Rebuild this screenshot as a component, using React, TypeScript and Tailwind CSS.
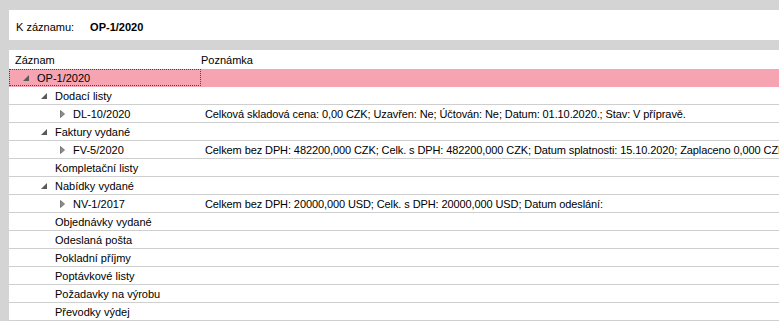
import React from 'react';

type Row = {
  label: string;
  level: number;
  icon?: 'open' | 'closed';
  note?: string;
  selected?: boolean;
};

const rows: Row[] = [
  { label: 'OP-1/2020', level: 0, icon: 'open', selected: true },
  { label: 'Dodací listy', level: 1, icon: 'open' },
  {
    label: 'DL-10/2020',
    level: 2,
    icon: 'closed',
    note: 'Celková skladová cena: 0,00 CZK; Uzavřen: Ne; Účtován: Ne; Datum: 01.10.2020.; Stav: V přípravě.',
  },
  { label: 'Faktury vydané', level: 1, icon: 'open' },
  {
    label: 'FV-5/2020',
    level: 2,
    icon: 'closed',
    note: 'Celkem bez DPH: 482200,000 CZK; Celk. s DPH: 482200,000 CZK; Datum splatnosti: 15.10.2020; Zaplaceno 0,000 CZK',
  },
  { label: 'Kompletační listy', level: 1 },
  { label: 'Nabídky vydané', level: 1, icon: 'open' },
  {
    label: 'NV-1/2017',
    level: 2,
    icon: 'closed',
    note: 'Celkem bez DPH: 20000,000 USD; Celk. s DPH: 20000,000 USD; Datum odeslání:',
  },
  { label: 'Objednávky vydané', level: 1 },
  { label: 'Odeslaná pošta', level: 1 },
  { label: 'Pokladní příjmy', level: 1 },
  { label: 'Poptávkové listy', level: 1 },
  { label: 'Požadavky na výrobu', level: 1 },
  { label: 'Převodky výdej', level: 1 },
];

// expander column starts here, label follows 14px later
const iconIndent = ['pl-[14px]', 'pl-[32px]', 'pl-[50px]'];
const textIndent = ['pl-[28px]', 'pl-[46px]', 'pl-[64px]'];

function Expander({ kind }: { kind: 'open' | 'closed' }) {
  return (
    <span className="w-[14px] h-[17px] flex items-center shrink-0">
      {kind === 'open' ? (
        <svg width="6" height="6" viewBox="0 0 6 6">
          <path d="M6 0 L6 6 L0 6 Z" fill="#595959" />
        </svg>
      ) : (
        <svg width="5" height="8" viewBox="0 0 5 8" className="ml-[1px]">
          <path d="M0.5 0.5 L4.5 4 L0.5 7.5 Z" fill="#8c8c8c" stroke="#7a7a7a" strokeWidth="1" />
        </svg>
      )}
    </span>
  );
}

function TreeRow({ row }: { row: Row }) {
  return (
    <div
      className={
        'flex h-[18px] items-center border-b whitespace-nowrap ' +
        (row.selected ? 'bg-[#f6a4b2] border-[#f6a4b2]' : 'border-[#cfcfcf]')
      }
    >
      <div
        className={
          'w-[192px] h-full shrink-0 flex items-center ' +
          (row.icon ? iconIndent[row.level] : textIndent[row.level]) +
          (row.selected ? ' outline-1 outline-dotted outline-offset-[-1px] outline-[#1f5e3a]' : '')
        }
      >
        {row.icon && <Expander kind={row.icon} />}
        <span className="pt-[1px]">{row.label}</span>
      </div>
      <div className="pl-[4px] pt-[1px] overflow-hidden tracking-[-0.1px]">{row.note}</div>
    </div>
  );
}

export default function App() {
  return (
    <div
      className="w-[779px] h-[321px] overflow-hidden bg-[#d4d4d4] pl-[9px] pt-[10px] text-[11px] text-black"
      style={{ fontFamily: '"Liberation Sans", Arial, sans-serif' }}
    >
      <div className="bg-white h-[30px] flex items-center pl-[7px] pt-[4px]">
        <span>K záznamu:</span>
        <span className="font-bold ml-[16px]">OP-1/2020</span>
      </div>
      <div className="mt-[10px] bg-white h-[271px] overflow-hidden">
        <div className="flex h-[19px] items-center pt-[1px]">
          <div className="w-[192px] pl-[6px]">Záznam</div>
          <div>Poznámka</div>
        </div>
        {rows.map((r) => (
          <TreeRow key={r.label} row={r} />
        ))}
      </div>
    </div>
  );
}
